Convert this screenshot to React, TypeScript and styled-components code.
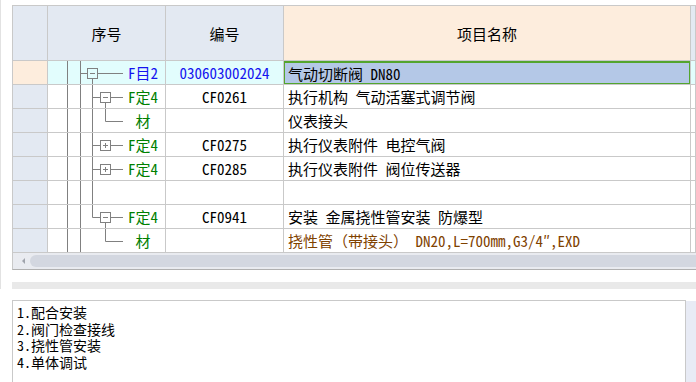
import React from "react";
import styled, { createGlobalStyle } from "styled-components";

const GlobalStyle = createGlobalStyle`
  html, body {
    margin: 0;
    padding: 0;
    background: #ffffff;
  }
  body {
    font-family: "Noto Sans Mono CJK SC", "Liberation Mono", "Noto Sans CJK SC", monospace;
    font-size: 15px;
    color: #000;
    overflow: hidden;
  }
`;

const LINE = "#808080";
const GRID = "#c9c9c9";

const Screen = styled.div`
  width: 696px;
  height: 382px;
  overflow: hidden;
  display: flex;
  flex-direction: column;
`;

const TopPanel = styled.div`
  border-left: 1px solid #e2e2e2;
  padding: 5px 0 0 11px;
`;

const Sheet = styled.div`
  border-left: 1px solid ${GRID};
  border-top: 1px solid ${GRID};
  border-bottom: 1px solid #b0b0b0;
  overflow: hidden;
`;

const Table = styled.div`
  display: grid;
  grid-template-columns: 35px 118px 118px 407px 1fr;
  grid-auto-rows: 24px;
  grid-template-rows: 55px;
`;

const HeadCell = styled.div<{ $bg: string }>`
  background: ${({ $bg }) => $bg};
  border-right: 1px solid ${GRID};
  border-bottom: 1px solid ${GRID};
  display: flex;
  align-items: center;
  justify-content: center;
  font-family: "Noto Sans CJK SC", sans-serif;
  font-size: 15px;
`;

const Cell = styled.div<{ $bg?: string; $align?: string; $color?: string }>`
  background: ${({ $bg }) => $bg || "#ffffff"};
  color: ${({ $color }) => $color || "#000"};
  border-right: 1px solid ${GRID};
  border-bottom: 1px solid ${GRID};
  display: flex;
  align-items: center;
  justify-content: ${({ $align }) => $align || "flex-start"};
  white-space: nowrap;
  overflow: hidden;
  position: relative;
`;

const CodeCell = styled(Cell)`
  justify-content: center;
  font-weight: 300;
`;

const NameCell = styled(Cell)`
  padding-left: 4px;
`;

const Selected = styled.div`
  position: absolute;
  inset: 0 -1px -1px -1px;
  background: #b4c8e7;
  border: 2px solid #53a52e;
  box-sizing: border-box;
  display: flex;
  align-items: center;
  padding-left: 3px;
  z-index: 1;
`;

const TreeCell = styled(Cell)`
  justify-content: flex-start;
`;

const TreeLabel = styled.span<{ $color: string }>`
  flex: 1;
  text-align: center;
  color: ${({ $color }) => $color};
  padding-right: 2px;
`;

const ScrollBar = styled.div`
  height: 16px;
  background: #e9ebf0;
  display: flex;
  align-items: center;
  padding-left: 9px;
  gap: 5px;
`;

const Arrow = styled.span`
  width: 0;
  height: 0;
  border-top: 3px solid transparent;
  border-bottom: 3px solid transparent;
  border-right: 3px solid #a0a4ac;
`;

const Thumb = styled.div`
  flex: 1;
  height: 12px;
  border-radius: 6px 0 0 6px;
  background: #d3d7e0;
`;

const Divider = styled.div`
  height: 7px;
  background: #e9e9e9;
  margin-top: 12px;
`;

const BottomPanel = styled.div`
  flex: 1;
  padding: 11px 0 0 12px;
  display: flex;
`;

const Memo = styled.div`
  flex: 1;
  border-top: 1px solid ${GRID};
  border-left: 1px solid ${GRID};
  border-right: 1px solid ${GRID};
  padding: 3px 0 0 4px;
  font-size: 14px;
  line-height: 16.5px;
  font-family: "Noto Sans Mono CJK SC", "Liberation Mono", "Noto Sans CJK SC", monospace;
`;

const MemoLine = styled.div`
  height: 16.5px;
  display: flex;
  align-items: center;
`;

const MemoTrack = styled.div`
  width: 10px;
  margin-top: 1px;
  background: #e8ebf5;
`;

type Kind = "root" | "open" | "leaf" | "closed" | "gap" | "lastOpen" | "lastLeaf";

function Box({ x, plus }: { x: number; plus?: boolean }) {
  return (
    <g stroke={LINE} fill="none">
      <rect x={x + 0.5} y={7.5} width={10} height={10} />
      <line x1={x + 3} y1={12.5} x2={x + 8} y2={12.5} />
      {plus && <line x1={x + 5.5} y1={10} x2={x + 5.5} y2={15} />}
    </g>
  );
}

function Tree({ kind }: { kind: Kind }) {
  return (
    <svg width="75" height="23" viewBox="0 0 75 23" style={{ flex: "none" }}>
      <g stroke={LINE} fill="none">
        <line x1={19.5} y1={0} x2={19.5} y2={24} />
        <line x1={32.5} y1={0} x2={32.5} y2={24} />
        {kind === "root" && (
          <>
            <line x1={32.5} y1={12.5} x2={39} y2={12.5} />
            <line x1={50} y1={12.5} x2={75} y2={12.5} />
            <line x1={44.5} y1={18} x2={44.5} y2={24} />
          </>
        )}
        {(kind === "open" || kind === "closed" || kind === "leaf" || kind === "gap") && (
          <line x1={44.5} y1={0} x2={44.5} y2={24} />
        )}
        {kind === "lastOpen" && <line x1={44.5} y1={0} x2={44.5} y2={12.5} />}
        {(kind === "open" || kind === "closed" || kind === "lastOpen") && (
          <>
            <line x1={44.5} y1={12.5} x2={52} y2={12.5} />
            <line x1={63} y1={12.5} x2={75} y2={12.5} />
          </>
        )}
        {(kind === "open" || kind === "lastOpen") && (
          <line x1={57.5} y1={18} x2={57.5} y2={24} />
        )}
        {(kind === "leaf" || kind === "lastLeaf") && (
          <>
            <line x1={57.5} y1={0} x2={57.5} y2={12.5} />
            <line x1={57.5} y1={12.5} x2={75} y2={12.5} />
          </>
        )}
      </g>
      {kind === "root" && <Box x={39} />}
      {(kind === "open" || kind === "lastOpen") && <Box x={52} />}
      {kind === "closed" && <Box x={52} plus />}
    </svg>
  );
}

type Row = {
  kind: Kind;
  label: string;
  labelColor: string;
  code: string;
  codeColor?: string;
  name: string;
  nameColor?: string;
};

const rows: Row[] = [
  { kind: "root", label: "F目2", labelColor: "#1414f0", code: "030603002024", codeColor: "#1414f0", name: "气动切断阀 DN80" },
  { kind: "open", label: "F定4", labelColor: "#008000", code: "CF0261", name: "执行机构 气动活塞式调节阀" },
  { kind: "leaf", label: "材", labelColor: "#008000", code: "", name: "仪表接头" },
  { kind: "closed", label: "F定4", labelColor: "#008000", code: "CF0275", name: "执行仪表附件 电控气阀" },
  { kind: "closed", label: "F定4", labelColor: "#008000", code: "CF0285", name: "执行仪表附件 阀位传送器" },
  { kind: "gap", label: "", labelColor: "#008000", code: "", name: "" },
  { kind: "lastOpen", label: "F定4", labelColor: "#008000", code: "CF0941", name: "安装 金属挠性管安装 防爆型" },
  { kind: "lastLeaf", label: "材", labelColor: "#008000", code: "", name: "挠性管（带接头） DN20,L=700mm,G3/4″,EXD", nameColor: "#7f4200" },
];

const HEAD = "#e3e9f2";
const PEACH = "#fdeddd";
const CYAN = "#e2fdfd";

const notes = ["1.配合安装", "2.阀门检查接线", "3.挠性管安装", "4.单体调试"];

export default function App() {
  return (
    <Screen>
      <GlobalStyle />
      <TopPanel>
        <Sheet>
          <Table>
            <HeadCell $bg={HEAD} />
            <HeadCell $bg={HEAD}>序号</HeadCell>
            <HeadCell $bg={HEAD}>编号</HeadCell>
            <HeadCell $bg={PEACH}>项目名称</HeadCell>
            <HeadCell $bg={HEAD} />
            {rows.map((r, i) => {
              const active = i === 0;
              const rowBg = active ? CYAN : undefined;
              return (
                <React.Fragment key={i}>
                  <Cell $bg={active ? PEACH : HEAD} />
                  <TreeCell $bg={rowBg}>
                    <Tree kind={r.kind} />
                    <TreeLabel $color={r.labelColor}>{r.label}</TreeLabel>
                  </TreeCell>
                  <CodeCell $bg={rowBg} $color={r.codeColor}>
                    {r.code}
                  </CodeCell>
                  {active ? (
                    <NameCell $bg={rowBg}>
                      <Selected>{r.name}</Selected>
                    </NameCell>
                  ) : (
                    <NameCell $color={r.nameColor}>{r.name}</NameCell>
                  )}
                  <Cell $bg={rowBg} />
                </React.Fragment>
              );
            })}
          </Table>
          <ScrollBar>
            <Arrow />
            <Thumb />
          </ScrollBar>
        </Sheet>
        <Divider />
      </TopPanel>
      <BottomPanel>
        <Memo>
          {notes.map((n) => (
            <MemoLine key={n}>{n}</MemoLine>
          ))}
        </Memo>
        <MemoTrack />
      </BottomPanel>
    </Screen>
  );
}
